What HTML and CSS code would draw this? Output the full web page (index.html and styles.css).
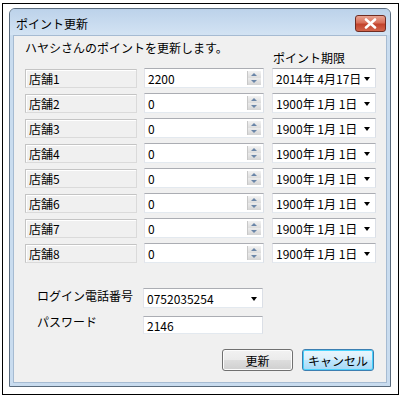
FILE: index.html
```html
<!DOCTYPE html>
<html lang="ja">
<head>
  <meta charset="UTF-8">
  <title>ポイント更新</title>
  <link rel="stylesheet" href="styles.css">
</head>
<body>
  <div class="frame">
    <div class="dialog">
      <div class="titlebar">
        <span class="title">ポイント更新</span>
        <button class="close" aria-label="閉じる">
          <svg width="13" height="11" viewBox="0 0 13 11"><path d="M2 1.5 L11 9.5 M11 1.5 L2 9.5" stroke="#fff" stroke-width="2.6" stroke-linecap="round"/></svg>
        </button>
      </div>
      <div class="client">
        <div class="shops">
          <p class="intro">ハヤシさんのポイントを更新します。</p>
          <span class="col-head">ポイント期限</span>

          <span class="shop">店舗1</span>
          <div class="num"><span>2200</span><i class="spin"></i></div>
          <div class="date"><span>2014年 4月17日</span><i class="drop"></i></div>

          <span class="shop">店舗2</span>
          <div class="num"><span>0</span><i class="spin"></i></div>
          <div class="date"><span>1900年 1月 1日</span><i class="drop"></i></div>

          <span class="shop">店舗3</span>
          <div class="num"><span>0</span><i class="spin"></i></div>
          <div class="date"><span>1900年 1月 1日</span><i class="drop"></i></div>

          <span class="shop">店舗4</span>
          <div class="num"><span>0</span><i class="spin"></i></div>
          <div class="date"><span>1900年 1月 1日</span><i class="drop"></i></div>

          <span class="shop">店舗5</span>
          <div class="num"><span>0</span><i class="spin"></i></div>
          <div class="date"><span>1900年 1月 1日</span><i class="drop"></i></div>

          <span class="shop">店舗6</span>
          <div class="num"><span>0</span><i class="spin"></i></div>
          <div class="date"><span>1900年 1月 1日</span><i class="drop"></i></div>

          <span class="shop">店舗7</span>
          <div class="num"><span>0</span><i class="spin"></i></div>
          <div class="date"><span>1900年 1月 1日</span><i class="drop"></i></div>

          <span class="shop">店舗8</span>
          <div class="num"><span>0</span><i class="spin"></i></div>
          <div class="date"><span>1900年 1月 1日</span><i class="drop"></i></div>
        </div>

        <div class="login">
          <span class="login-label">ログイン電話番号</span>
          <div class="combo"><span>0752035254</span><i class="drop"></i></div>
          <span class="login-label pass">パスワード</span>
          <div class="field"><span>2146</span></div>
        </div>

        <div class="buttons">
          <button class="btn">更新</button>
          <button class="btn focused">キャンセル</button>
        </div>
      </div>
    </div>
  </div>
</body>
</html>
```

FILE: styles.css
```css
body {
  margin: 0;
  background: #fff;
  font-family: "MS UI Gothic", "Noto Sans CJK JP", sans-serif;
  font-size: 12px;
  color: #000;
}

.frame {
  margin: 3px 2px 2px 2px;
  height: 382px;
  border: 1px solid #000;
  padding: 4px 7px 4px 6px;
}

.dialog {
  height: 374px;
  border: 1px solid #5a6b7d;
  border-radius: 6px 6px 0 0;
  background: #c9dcef;
  display: flex;
  flex-direction: column;
  padding: 0 3px 3px 3px;
}

.titlebar {
  height: 26px;
  box-sizing: border-box;
  display: flex;
  align-items: center;
  justify-content: space-between;
  background: linear-gradient(#bcd2ea, #d3e3f3);
  margin: 0 -3px;
  padding: 3px 4px 0 6px;
  border-radius: 5px 5px 0 0;
}

.title {
  font-size: 12px;
  line-height: 1;
}

.close {
  width: 31px;
  height: 17px;
  border: 1px solid #6f2c22;
  border-radius: 3px;
  background: linear-gradient(#e8a392 0%, #d86f59 45%, #c2432c 55%, #d2654c 100%);
  display: flex;
  align-items: center;
  justify-content: center;
  padding: 0;
  margin-top: -1px;
}

.client {
  flex: 1;
  background: #f0f0f0;
  border: 1px solid #a6bbd2;
  padding: 0 12px 0 11px;
  display: flex;
  flex-direction: column;
}

.shops {
  display: grid;
  grid-template-columns: 112px 120px 105px;
  grid-template-rows: 22px;
  grid-auto-rows: 20px;
  column-gap: 7px;
  row-gap: 5px;
  margin-top: 5px;
}

.intro {
  grid-column: 1 / 3;
  align-self: start;
  margin: 0;
  line-height: 14px;
  white-space: nowrap;
}

.col-head {
  grid-column: 3;
  align-self: end;
  line-height: 14px;
  padding-left: 2px;
  margin-bottom: -2px;
}

.shop {
  border: 1px solid #c4c4c4;
  border-right-color: #dadada;
  border-bottom-color: #dadada;
  background: #f0f0f0;
  box-shadow: inset 1px 1px 0 #fff;
  padding-left: 3px;
  line-height: 17px;
  height: 19px;
  align-self: center;
  box-sizing: border-box;
}

.num, .date, .combo, .field {
  position: relative;
  background: #fff;
  border: 1px solid;
  border-color: #abadb3 #dbdfe6 #e3e9ef #e2e3ea;
  box-sizing: border-box;
  display: flex;
  align-items: center;
  padding-left: 3px;
}

.date {
  margin-left: 1px;
  padding-left: 3px;
  white-space: pre;
}

.spin {
  position: absolute;
  right: 2px;
  top: 2px;
  width: 13px;
  height: 14px;
  background:
    linear-gradient(#f3f3f3, #dcdcdc) top / 100% 7px no-repeat,
    linear-gradient(#ececec, #d4d4d4) bottom / 100% 7px no-repeat;
  border-left: 1px solid #c8c8c8;
}

.spin::before, .spin::after {
  content: "";
  position: absolute;
  left: 3px;
  border-left: 3.5px solid transparent;
  border-right: 3.5px solid transparent;
}

.spin::before {
  top: 2px;
  border-bottom: 3px solid #6b86a8;
}

.spin::after {
  bottom: 2px;
  border-top: 3px solid #6b86a8;
}

.drop {
  position: absolute;
  right: 5px;
  top: 8px;
  border-left: 3.5px solid transparent;
  border-right: 3.5px solid transparent;
  border-top: 4px solid #000;
}

.login {
  display: grid;
  grid-template-columns: 106px 120px;
  grid-template-rows: 20px 18px;
  row-gap: 8px;
  margin: 25px 0 0 12px;
}

.login-label {
  line-height: 16px;
  white-space: nowrap;
}

.pass {
  align-self: start;
  margin-top: -2px;
}

.buttons {
  display: flex;
  justify-content: flex-end;
  gap: 9px;
  margin-top: auto;
  margin-bottom: 11px;
}

.btn {
  width: 71px;
  height: 22px;
  border: 1px solid #707070;
  border-radius: 3px;
  background: linear-gradient(#f2f2f2 0%, #ebebeb 48%, #dddddd 52%, #cfcfcf 100%);
  box-shadow: inset 0 0 0 1px #fcfcfc;
  font-family: inherit;
  font-size: 12px;
  padding: 0;
}

.focused {
  width: 72px;
  border-color: #3c7fb1;
  box-shadow: inset 0 0 0 1px #48d2fc;
  background: linear-gradient(#eaf6fd 0%, #d9f0fc 48%, #bee6fd 52%, #a7d9f5 100%);
}
```
